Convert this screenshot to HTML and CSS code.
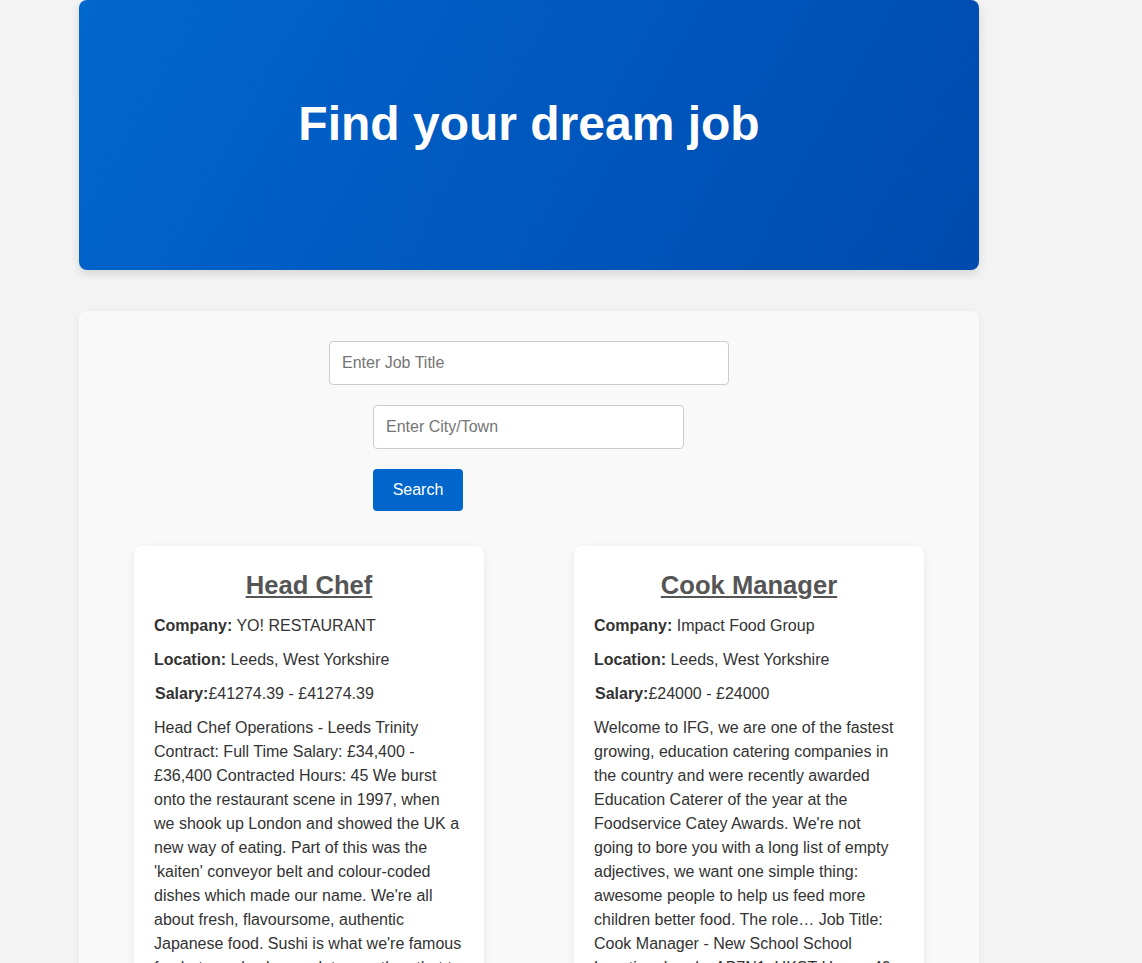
FILE: index.html
```html
<!DOCTYPE html>
<html lang="en">
<head>
<meta charset="utf-8">
<title>Find your dream job</title>
<link rel="stylesheet" href="styles.css">
</head>
<body>
<div class="page">
  <header class="hero">
    <h1>Find your dream job</h1>
  </header>
  <main class="search-panel">
    <form class="search-form">
      <input class="field field-title" type="text" placeholder="Enter Job Title">
      <div class="search-row">
        <input class="field field-city" type="text" placeholder="Enter City/Town">
        <button class="search-btn" type="button">Search</button>
      </div>
    </form>
    <section class="results">
      <article class="job-card">
        <h2 class="job-title"><a href="#">Head Chef</a></h2>
        <p><strong>Company:</strong> YO! RESTAURANT</p>
        <p><strong>Location:</strong> Leeds, West Yorkshire</p>
        <p class="salary"><strong>Salary:</strong>£41274.39 - £41274.39</p>
        <p>Head Chef Operations - Leeds Trinity Contract: Full Time Salary: £34,400 - £36,400 Contracted Hours: 45 We burst onto the restaurant scene in 1997, when we shook up London and showed the UK a new way of eating. Part of this was the 'kaiten' conveyor belt and colour-coded dishes which made our name. We're all about fresh, flavoursome, authentic Japanese food. Sushi is what we're famous for, but we also have a lot more than that to offer our guests every day.</p>
      </article>
      <article class="job-card">
        <h2 class="job-title"><a href="#">Cook Manager</a></h2>
        <p><strong>Company:</strong> Impact Food Group</p>
        <p><strong>Location:</strong> Leeds, West Yorkshire</p>
        <p class="salary"><strong>Salary:</strong>£24000 - £24000</p>
        <p>Welcome to IFG, we are one of the fastest growing, education catering companies in the country and were recently awarded Education Caterer of the year at the Foodservice Catey Awards. We're not going to bore you with a long list of empty adjectives, we want one simple thing: awesome people to help us feed more children better food. The role… Job Title: Cook Manager - New School School Location: Leeds, AB7N1, UKST Hours: 40 per week.</p>
      </article>
    </section>
  </main>
</div>
</body>
</html>
```
FILE: styles.css
```css
* { box-sizing: border-box; }

html, body {
  margin: 0;
  padding: 0;
}

body {
  background: #f3f3f3;
  font-family: "Liberation Sans", Arial, sans-serif;
  color: #333;
  font-size: 16px;
}

.page {
  width: 900px;
  margin: 0 0 0 79px;
}

.hero {
  height: 270px;
  border-radius: 8px;
  background: linear-gradient(120deg, #0067cd 0%, #0058be 50%, #004aad 100%);
  box-shadow: 0 4px 10px rgba(0, 0, 0, 0.12);
  display: flex;
  justify-content: center;
  padding-top: 96px;
}

.hero h1 {
  margin: 0;
  color: #fff;
  font-size: 48px;
  font-weight: bold;
  line-height: 55px;
}

.search-panel {
  margin-top: 41px;
  background: #f9f9f9;
  border-radius: 8px;
  box-shadow: 0 2px 8px rgba(0, 0, 0, 0.06);
  padding: 30px 0 40px;
}

.search-form {
  display: flex;
  flex-direction: column;
  align-items: center;
  gap: 20px;
}

.search-row {
  display: flex;
  flex-direction: column;
  align-items: flex-start;
  gap: 20px;
  width: 312px;
}

.field {
  height: 44px;
  padding: 0 12px;
  border: 1px solid #ccc;
  border-radius: 4px;
  background: #fff;
  font-family: "Liberation Sans", Arial, sans-serif;
  font-size: 16px;
  color: #333;
  outline: none;
}

.field::placeholder { color: #757575; }

.field-title { width: 400px; }
.field-city { width: 311px; }

.search-btn {
  height: 42px;
  width: 90px;
  border: none;
  border-radius: 4px;
  background: #0066cc;
  color: #fff;
  font-family: "Liberation Sans", Arial, sans-serif;
  font-size: 16px;
  cursor: pointer;
}

.results {
  display: flex;
  justify-content: center;
  align-items: flex-start;
  gap: 90px;
  margin-top: 35px;
}

.job-card {
  width: 350px;
  background: #fff;
  border-radius: 8px;
  box-shadow: 0 2px 8px rgba(0, 0, 0, 0.08);
  padding: 20px;
  line-height: 24px;
}

.job-title {
  margin: 0 0 9px;
  text-align: center;
  font-size: 25.6px;
  line-height: 39px;
}

.job-title a {
  color: #555;
  text-decoration: underline;
}

.job-card p {
  margin: 0 0 10px;
}

.salary { padding-left: 1px; }
```
